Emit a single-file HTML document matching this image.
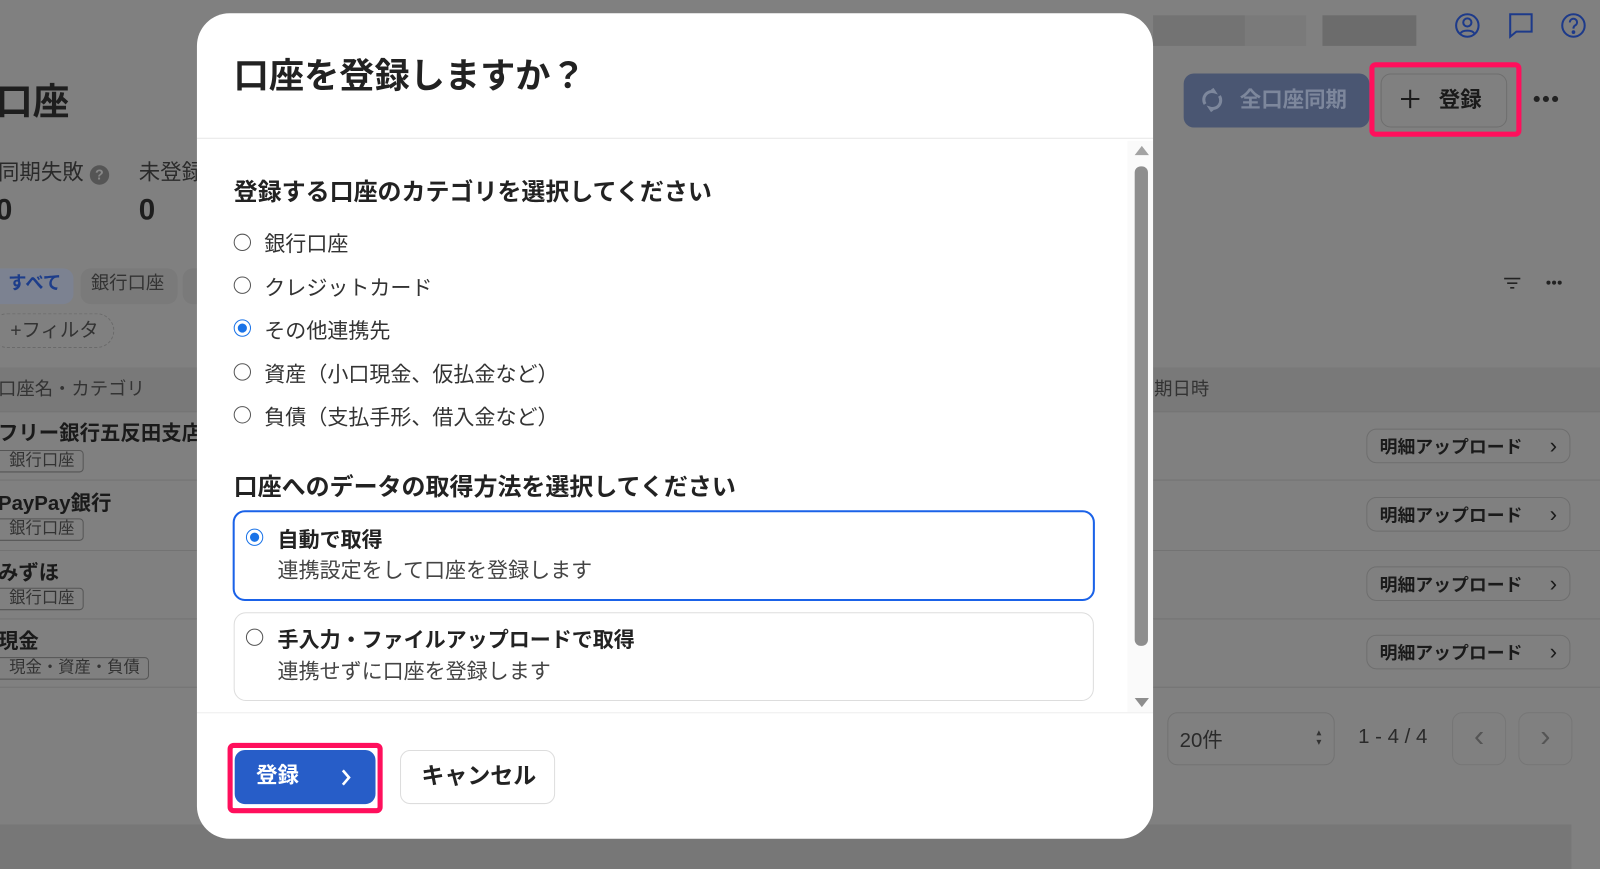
<!DOCTYPE html>
<html><head><meta charset="utf-8"><style>
*{box-sizing:border-box;margin:0;padding:0}
html,body{width:1600px;height:852px;overflow:hidden;background:#808080}
#w{position:absolute;left:0;top:0;width:1568px;height:835px;transform:scale(1.020408);transform-origin:0 0;font-family:"Liberation Sans","Noto Sans CJK JP",sans-serif;color:#1a1a1a}
.a{position:absolute;white-space:nowrap}
.tag{position:absolute;border:1px solid #555;border-radius:4px;font-size:16px;color:#333;padding:0 8px;height:22px;line-height:20px}
.up{position:absolute;left:1339px;width:200px;height:34px;border:1px solid #6e6e6e;border-radius:10px;font-size:17.5px;font-weight:bold;color:#1a1a1a;padding:0 12px;display:flex;align-items:center;justify-content:space-between}
.up b{font-size:22px;font-weight:normal}
.row{position:absolute;left:0;width:1568px;border-top:1px solid #737373}
.r{position:absolute;width:17px;height:17px;border:1.5px solid #555;border-radius:50%;background:#fff}
.r.on{border:1.5px solid #1a73e8}
.r.on::after{content:"";position:absolute;left:2.5px;top:2.5px;width:9px;height:9px;border-radius:50%;background:#1a73e8}
.lab{position:absolute;font-size:20.6px;color:#333;white-space:nowrap}
</style></head><body><div id="w">
<div class="a" style="left:-4px;top:71px;font-size:36px;font-weight:bold;color:#1e1e1e">口座</div>
<div class="a" style="left:-2px;top:153px;font-size:21px;color:#2a2a2a">同期失敗 <span style="display:inline-block;width:19px;height:19px;border-radius:50%;background:#555;color:#888;font-size:14px;text-align:center;line-height:19px;font-weight:bold">?</span></div>
<div class="a" style="left:136px;top:153px;font-size:21px;color:#2a2a2a">未登録</div>
<div class="a" style="left:-4px;top:190px;font-size:29px;font-weight:bold;color:#1e1e1e">0</div>
<div class="a" style="left:136px;top:190px;font-size:29px;font-weight:bold;color:#1e1e1e">0</div>
<div class="a" style="left:-10px;top:263px;width:82px;height:35px;border-radius:10px;background:#7c8291"></div>
<div class="a" style="left:8px;top:263px;font-size:18px;font-weight:bold;color:#1d3d8a">すべて</div>
<div class="a" style="left:79px;top:263px;width:95px;height:35px;border-radius:10px;background:#7a7a7a"></div>
<div class="a" style="left:89px;top:263px;font-size:18px;color:#333">銀行口座</div>
<div class="a" style="left:179px;top:263px;width:30px;height:35px;border-radius:10px;background:#7a7a7a"></div>
<div class="a" style="left:-10px;top:307px;width:122px;height:34px;border-radius:17px;border:1px dashed #6a6a6a"></div>
<div class="a" style="left:10px;top:309px;font-size:19px;color:#333">+フィルタ</div>
<div class="a" style="left:0;top:360px;width:1568px;height:43px;background:#797979"></div>
<div class="a" style="left:-2px;top:367px;font-size:18px;color:#333">口座名・カテゴリ</div>
<div class="a" style="left:1131px;top:367px;font-size:18px;color:#333">期日時</div>
<div class="row" style="top:403px"></div><div class="row" style="top:470px"></div><div class="row" style="top:539px"></div><div class="row" style="top:606px"></div><div class="row" style="top:673px"></div>
<div class="a" style="left:-2px;top:408px;font-size:20px;font-weight:bold">フリー銀行五反田支店</div>
<div class="tag" style="left:-10px;top:441px;padding-left:18px">銀行口座</div>
<div class="a" style="left:-2px;top:477px;font-size:20px;font-weight:bold">PayPay銀行</div>
<div class="tag" style="left:-10px;top:508px;padding-left:18px">銀行口座</div>
<div class="a" style="left:-2px;top:545px;font-size:20px;font-weight:bold">みずほ</div>
<div class="tag" style="left:-10px;top:576px;padding-left:18px">銀行口座</div>
<div class="a" style="left:-2px;top:612px;font-size:20px;font-weight:bold">現金</div>
<div class="tag" style="left:-10px;top:644px;padding-left:18px">現金・資産・負債</div>
<div class="up" style="top:420px">明細アップロード <b>›</b></div>
<div class="up" style="top:487px">明細アップロード <b>›</b></div>
<div class="up" style="top:555px">明細アップロード <b>›</b></div>
<div class="up" style="top:622px">明細アップロード <b>›</b></div>
<div class="a" style="left:1144px;top:698px;width:164px;height:52px;border:1px solid #727272;border-radius:10px"></div>
<div class="a" style="left:1156px;top:709px;font-size:20px;color:#2a2a2a">20件</div>
<div class="a" style="left:1290px;top:714px;font-size:10px;color:#333;line-height:9px">▴<br>▾</div>
<div class="a" style="left:1331px;top:711px;font-size:20px;color:#2a2a2a">1 - 4 / 4</div>
<div class="a" style="left:1423px;top:698px;width:53px;height:52px;border:1px solid #767676;border-radius:10px;text-align:center;font-size:30px;color:#555;line-height:46px">‹</div>
<div class="a" style="left:1488px;top:698px;width:53px;height:52px;border:1px solid #767676;border-radius:10px;text-align:center;font-size:30px;color:#555;line-height:46px">›</div>
<div class="a" style="left:0;top:808px;width:1540px;height:44px;background:#777"></div>
<div class="a" style="left:1130px;top:15px;width:90px;height:30px;background:#6e6e6e;opacity:.7"></div>
<div class="a" style="left:1220px;top:15px;width:60px;height:30px;background:#7a7a7a"></div>
<div class="a" style="left:1296px;top:15px;width:92px;height:30px;background:#6c6c6c"></div>
<svg class="a" style="left:1425px;top:12px" width="26" height="26" viewBox="0 0 26 26" fill="none" stroke="#1d3a8a" stroke-width="2"><circle cx="13" cy="13" r="11"/><circle cx="13" cy="10" r="4"/><path d="M6 21c2-4 12-4 14 0"/></svg>
<svg class="a" style="left:1477px;top:12px" width="26" height="26" viewBox="0 0 26 26" fill="none" stroke="#1d3a8a" stroke-width="2"><path d="M2 2h22v17H9l-6 5V2z"/></svg>
<svg class="a" style="left:1529px;top:12px" width="26" height="26" viewBox="0 0 26 26" fill="none" stroke="#1d3a8a" stroke-width="2"><circle cx="13" cy="13" r="11"/><path d="M9.5 10a3.5 3.5 0 1 1 5 3c-1.2.7-1.5 1.3-1.5 3"/><circle cx="13" cy="19.5" r=".8" fill="#1d3a8a"/></svg>
<div class="a" style="left:1160px;top:72px;width:182px;height:53px;border-radius:10px;background:#4a5672"></div>
<svg class="a" style="left:1176px;top:84px" width="24" height="28" viewBox="0 0 24 28" fill="none" stroke="#7d879c" stroke-width="3"><path d="M5 18a8 8 0 0 1 9-12l-2-3M19 10a8 8 0 0 1-9 12l2 3"/></svg>
<div class="a" style="left:1215px;top:82px;font-size:21px;font-weight:bold;color:#7d879c">全口座同期</div>
<div class="a" style="left:1342px;top:61px;width:149px;height:73px;border:5px solid #ff0f5c;border-radius:6px"></div>
<div class="a" style="left:1353px;top:72px;width:124px;height:53px;border:1px solid #6e6e6e;border-radius:10px"></div>
<svg class="a" style="left:1372px;top:87px" width="20" height="20" viewBox="0 0 20 20" stroke="#1a1a1a" stroke-width="2"><path d="M10 1v18M1 10h18"/></svg>
<div class="a" style="left:1410px;top:82px;font-size:21px;font-weight:bold;color:#1a1a1a">登録</div>
<svg class="a" style="left:1502px;top:93px" width="26" height="8"><circle cx="4" cy="4" r="3" fill="#222"/><circle cx="13" cy="4" r="3" fill="#222"/><circle cx="22" cy="4" r="3" fill="#222"/></svg>
<svg class="a" style="left:1474px;top:271px" width="16" height="13" stroke="#222" stroke-width="1.6"><path d="M0 2h16M3 6.5h10M6 11h4"/></svg>
<svg class="a" style="left:1515px;top:274px" width="16" height="6"><circle cx="2.5" cy="3" r="2" fill="#222"/><circle cx="8" cy="3" r="2" fill="#222"/><circle cx="13.5" cy="3" r="2" fill="#222"/></svg>
<div class="a" style="left:193px;top:13px;width:937px;height:809px;background:#fff;border-radius:32px;overflow:hidden">
 <div class="a" style="left:36px;top:33px;font-size:34.5px;font-weight:bold;color:#222">口座を登録しますか？</div>
 <div class="a" style="left:0;top:122px;width:937px;height:1px;background:#e6e6e6"></div>
 <div class="a" style="left:36px;top:156px;font-size:23.5px;font-weight:bold;color:#222">登録する口座のカテゴリを選択してください</div>
 <div class="r" style="left:36px;top:216px"></div><div class="lab" style="left:66px;top:209px">銀行口座</div>
 <div class="r" style="left:36px;top:258px"></div><div class="lab" style="left:66px;top:252px">クレジットカード</div>
 <div class="r on" style="left:36px;top:300px"></div><div class="lab" style="left:66px;top:294px">その他連携先</div>
 <div class="r" style="left:36px;top:343px"></div><div class="lab" style="left:66px;top:337px">資産（小口現金、仮払金など）</div>
 <div class="r" style="left:36px;top:385px"></div><div class="lab" style="left:66px;top:379px">負債（支払手形、借入金など）</div>
 <div class="a" style="left:36px;top:445px;font-size:23.5px;font-weight:bold;color:#222">口座へのデータの取得方法を選択してください</div>
 <div class="a" style="left:35px;top:487px;width:845px;height:89px;border:2px solid #1a62e8;border-radius:12px"></div>
 <div class="r on" style="left:48px;top:505px"></div>
 <div class="a" style="left:79px;top:499px;font-size:20.6px;font-weight:bold;color:#222">自動で取得</div>
 <div class="a" style="left:79px;top:529px;font-size:20.6px;color:#444">連携設定をして口座を登録します</div>
 <div class="a" style="left:36px;top:587px;width:843px;height:87px;border:1px solid #ddd;border-radius:12px"></div>
 <div class="r" style="left:48px;top:603px"></div>
 <div class="a" style="left:79px;top:597px;font-size:20.6px;font-weight:bold;color:#222">手入力・ファイルアップロードで取得</div>
 <div class="a" style="left:79px;top:628px;font-size:20.6px;color:#444">連携せずに口座を登録します</div>
 <div class="a" style="left:912px;top:125px;width:25px;height:560px;background:#fafafa"></div>
 <div class="a" style="left:919px;top:130px;width:0;height:0;border-left:7px solid transparent;border-right:7px solid transparent;border-bottom:9px solid #a3a3a3"></div>
 <div class="a" style="left:919px;top:150px;width:13px;height:470px;border-radius:6px;background:#8e8e8e"></div>
 <div class="a" style="left:919px;top:671px;width:0;height:0;border-left:7px solid transparent;border-right:7px solid transparent;border-top:9px solid #8e8e8e"></div>
 <div class="a" style="left:0;top:685px;width:937px;height:1px;background:#eee"></div>
 <div class="a" style="left:30px;top:715px;width:152px;height:69px;border:5px solid #ff0f5c;border-radius:6px"></div>
 <div class="a" style="left:37px;top:722px;width:138px;height:53px;background:#275dc8;border-radius:10px"></div>
 <div class="a" style="left:58px;top:731px;font-size:21px;font-weight:bold;color:#fff">登録</div>
 <svg class="a" style="left:140px;top:740px" width="12" height="18" fill="none" stroke="#fff" stroke-width="2.6"><path d="M3 2l6 7-6 7"/></svg>
 <div class="a" style="left:199px;top:722px;width:152px;height:53px;border:1px solid #ddd;border-radius:10px"></div>
 <div class="a" style="left:220px;top:730px;font-size:22.5px;font-weight:bold;color:#222">キャンセル</div>
</div>
</div></body></html>
